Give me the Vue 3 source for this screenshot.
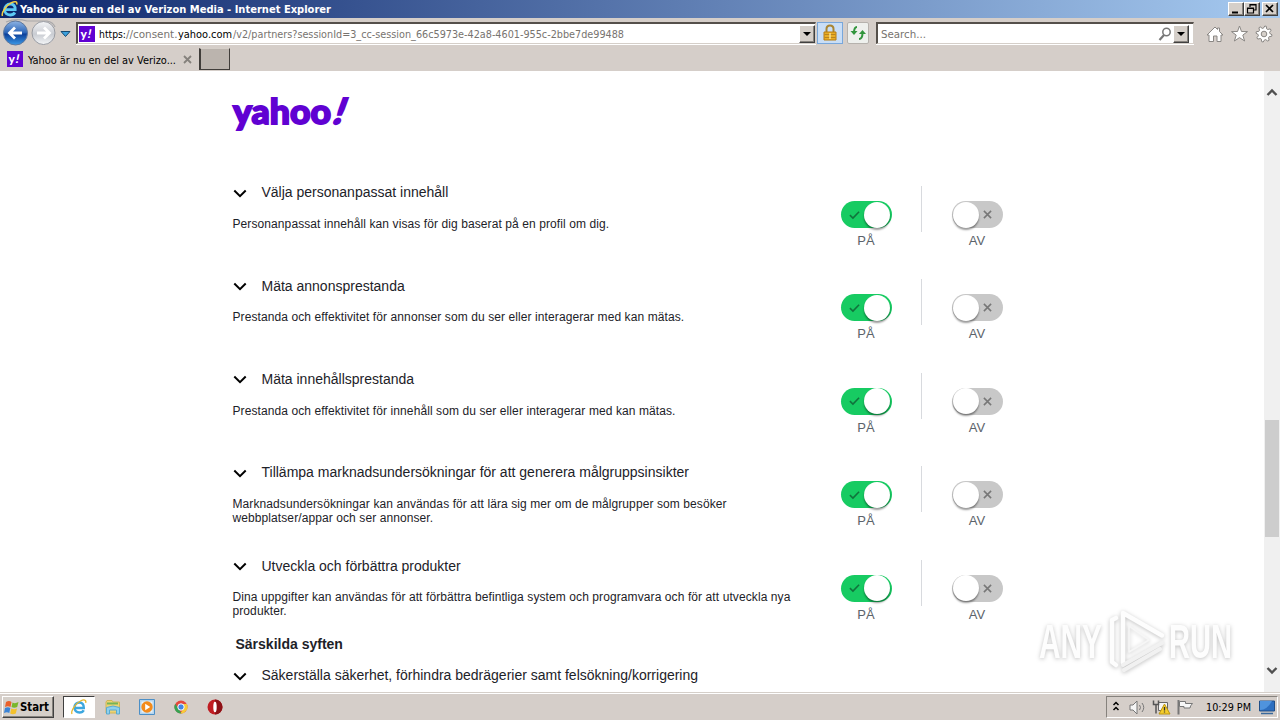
<template>
  <div class="screen">
    <header class="titlebar">
      <svg class="title-icon" viewBox="0 0 18 18">
        <path d="M3.4 9.6h10.8c.2-3.600-1.700-5.600-4.800-5.600-3.500 0-5.800 2.400-5.800 5.800 0 3.200 2.200 5.200 5.500 5.200 2.200 0 3.900-.9 4.800-2.500" fill="none" stroke="#5cc9f5" stroke-width="2.800" />
        <path d="M1.500 16c-1.500-3 3.500-10.500 9-13.300 3.500-1.800 6-1.200 5.200 1.800" fill="none" stroke="#f5cf45" stroke-width="1.500" />
      </svg>
      <svg class="title-text" width="320" height="18">
        <text x="1" y="13" textLength="311" lengthAdjust="spacingAndGlyphs">Yahoo är nu en del av Verizon Media - Internet Explorer</text>
      </svg>
      <div class="window-buttons">
        <span class="bevel"><svg viewBox="0 0 16 14"><path d="M4 10.500h6" stroke="#000" stroke-width="2" /></svg></span>
        <span class="bevel"><svg viewBox="0 0 16 14"><path d="M6 5V2.500h6V8h-2M6 3h6M3.500 6h6v5h-6zM3 6.500h7" fill="none" stroke="#000" stroke-width="1.200" /></svg></span>
        <span class="bevel close"><svg viewBox="0 0 16 14"><path d="M4 3l7 7M11 3l-7 7" stroke="#000" stroke-width="1.700" /></svg></span>
      </div>
    </header>

    <div class="navbar">
      <svg class="nav-arrows" viewBox="0 0 76 30">
        <defs>
          <linearGradient id="back" x1="0" y1="0" x2="0" y2="1">
            <stop offset="0" stop-color="#8eb4e4" />
            <stop offset=".48" stop-color="#2d66b8" />
            <stop offset=".55" stop-color="#0c409a" />
            <stop offset="1" stop-color="#3d9be8" />
          </linearGradient>
          <linearGradient id="fwd" x1="0" y1="0" x2="0" y2="1">
            <stop offset="0" stop-color="#f4f5f7" />
            <stop offset=".55" stop-color="#c9ccd2" />
            <stop offset="1" stop-color="#f4f6f8" />
          </linearGradient>
        </defs>
        <path d="M6 4Q16 0 27 3h20q6 1 8 6" fill="none" stroke="#a9a8aa" stroke-width="1.200" />
        <circle cx="15.500" cy="15" r="12" fill="url(#back)" stroke="#5f789d" />
        <path d="M22 15H10M15 9.500L9.500 15l5.500 5.500" fill="none" stroke="#fff" stroke-width="2.800" />
        <circle cx="43.500" cy="15" r="11.500" fill="url(#fwd)" stroke="#999ca3" />
        <path d="M37 15h12M44 9.500l5.500 5.500-5.500 5.500" fill="none" stroke="#fff" stroke-width="2.800" />
        <path d="M61 13.500h9l-4.500 5z" fill="#3ba0dc" stroke="#164a72" />
      </svg>
      <div class="field address">
        <span class="favicon"><svg viewBox="0 0 16 16"><text x="1.500" y="11.500">y</text><text x="8.500" y="11.500" transform="skewX(-12) translate(2)">!</text></svg></span>
        <svg class="url" width="690" height="18">
          <text x="0" y="13" textLength="27" lengthAdjust="spacingAndGlyphs" class="dark">https:</text>
          <text x="27" y="13" textLength="51.500" lengthAdjust="spacingAndGlyphs">//consent.</text>
          <text x="79" y="13" textLength="54" lengthAdjust="spacingAndGlyphs" class="dark">yahoo.com</text>
          <text x="134" y="13" textLength="391" lengthAdjust="spacingAndGlyphs">/v2/partners?sessionId=3_cc-session_66c5973e-42a8-4601-955c-2bbe7de99488</text>
        </svg>
        <span class="bevel drop"><i></i></span>
      </div>
      <div class="tool lock">
        <svg viewBox="0 0 16 18">
          <path d="M4.500 9V5q0-3.500 3.500-3.500T11.500 5v4" fill="none" stroke="#a98532" stroke-width="2" />
          <path d="M2 8h12v8H2z" fill="#e9ae24" stroke="#b77d13" />
          <path d="M2.500 10.500h11M2.500 13.500h11" stroke="#b98420" />
          <path d="M8 9v6" stroke="#f9e292" stroke-width="1.500" />
        </svg>
      </div>
      <div class="tool refresh">
        <svg viewBox="0 0 18 18">
          <path d="M8 3Q5 3 5 9M10 15q3.500 0 3.500-6" fill="none" stroke="#31953c" stroke-width="2" />
          <path d="M1.500 7h7L5 11zM10 10h7l-3.500-4z" fill="#31953c" />
        </svg>
      </div>
      <div class="field search">
        <svg width="60" height="18"><text x="3" y="13" textLength="45" lengthAdjust="spacingAndGlyphs">Search...</text></svg>
        <svg class="magnifier" viewBox="0 0 14 14"><circle cx="8.500" cy="5" r="3.700" fill="none" stroke="#777" stroke-width="1.500" /><path d="M6 8l-4.500 5" stroke="#777" stroke-width="2.200" /></svg>
        <span class="bevel drop"><i></i></span>
      </div>
      <svg class="nav-icons" viewBox="0 0 68 20">
        <g fill="#fff" stroke="#8a8784">
          <path d="M1 12L9 4l2.500 2.500V5h2v3.500L17 12h-2v6.500h-4V13H7.500v5.500H3V12z" />
          <path d="M33.500 3l2 5.500 6 .1-4.700 3.500 1.800 5.900-5.100-3.400-5.100 3.400 1.800-5.900-4.700-3.500 6-.1z" />
          <path :d="gear" />
          <circle cx="58" cy="11" r="2.800" fill="#d6d0ca" />
        </g>
      </svg>
    </div>

    <div class="tabs">
      <div class="tab">
        <span class="favicon"><svg viewBox="0 0 16 16"><text x="1.500" y="11.500">y</text><text x="8.500" y="11.500" transform="skewX(-12) translate(2)">!</text></svg></span>
        <svg width="154" height="18"><text x="1" y="14" textLength="148" lengthAdjust="spacingAndGlyphs">Yahoo är nu en del av Verizo...</text></svg>
        <svg class="tab-close" viewBox="0 0 9 9"><path d="M1 1l7 7M8 1L1 8" stroke="#85817c" stroke-width="1.800" /></svg>
      </div>
      <div class="new-tab"></div>
    </div>

    <div class="viewport">
      <main class="page">
        <svg class="logo" width="122" height="40" viewBox="0 0 122 40">
          <text x="1" y="27.500" textLength="98" lengthAdjust="spacingAndGlyphs">yahoo</text>
          <text x="0" y="0" class="bang" transform="translate(99 27.500) skewX(-20)">!</text>
        </svg>

        <section v-for="row in rows" :key="row.title" class="row">
          <div class="info">
            <h3><svg class="chevron" viewBox="0 0 14 9"><path d="M1.300 1.500L7 7.200l5.700-5.700" /></svg>{{ row.title }}</h3>
            <p><span v-for="line in row.lines" :key="line">{{ line }}</span></p>
          </div>
          <div class="choice">
            <div class="switch on"><svg viewBox="0 0 12 10"><path d="M1 5.200L4.300 8.400 11 1.500" /></svg><b></b></div>
            <span>PÅ</span>
          </div>
          <div class="divider"></div>
          <div class="choice">
            <div class="switch"><b></b><svg viewBox="0 0 10 10"><path d="M1 1l8 8M9 1L1 9" /></svg></div>
            <span>AV</span>
          </div>
        </section>

        <h2>Särskilda syften</h2>
        <h3><svg class="chevron" viewBox="0 0 14 9"><path d="M1.300 1.500L7 7.200l5.700-5.700" /></svg>Säkerställa säkerhet, förhindra bedrägerier samt felsökning/korrigering</h3>
      </main>

      <div class="scrollbar">
        <svg viewBox="0 0 12 9"><path d="M1.500 7L6 2.500 10.500 7" /></svg>
        <div class="thumb"></div>
        <svg viewBox="0 0 12 9"><path d="M1.500 2L6 6.500 10.500 2" /></svg>
      </div>

      <svg class="watermark" width="250" height="80" viewBox="0 0 250 80">
        <g fill="#fdfdfd">
          <text x="9" y="55" textLength="63" lengthAdjust="spacingAndGlyphs">ANY</text>
          <text x="139" y="55" textLength="63" lengthAdjust="spacingAndGlyphs">RUN</text>
        </g>
        <g fill="none" stroke="#fdfdfd" stroke-width="4.500" stroke-linejoin="round" stroke-linecap="round">
          <path d="M93 60V10l39 22.500M86 15l-4 2v42l4 3" />
          <path d="M132 40L93 62M130 46L94 67" stroke="#f1f1f1" stroke-width="4" />
          <path d="M99 23v26l20-12z" stroke="#f6f6f6" stroke-width="1.500" />
        </g>
      </svg>
    </div>

    <footer class="taskbar">
      <div class="bevel start">
        <svg viewBox="0 0 16 16">
          <path d="M2 3q3-2 5.500 0L6.500 8Q4 6.500 1 8z" fill="#e9602b" />
          <path d="M8.500 3.500Q11 5 14.500 3l-1.300 5q-3 1.500-5.700 0z" fill="#79b72c" />
          <path d="M1 9q3-1.500 5.300 0l-1 5Q3 12.500 0 14z" fill="#3a83d6" />
          <path d="M7.300 9.500q2.700 1.500 5.700 0l-1.200 5q-3 1.500-5.600 0z" fill="#f4c12c" />
        </svg>
        <svg width="36" height="18"><text x="0" y="13" textLength="29" lengthAdjust="spacingAndGlyphs">Start</text></svg>
      </div>
      <div class="launch active">
        <svg viewBox="0 0 18 18">
          <path d="M4 10h9.800C14 6.500 12.200 4.500 9.500 4.500c-3 0-5 2.200-5 5 0 3 2 5 5 5 2 0 3.500-.8 4.200-2.300" fill="none" stroke="#3ca7df" stroke-width="2.500" />
          <path d="M2 16c-1.500-3 3.500-10.500 8.500-13 3.500-1.800 6-1.200 5.200 1.800" fill="none" stroke="#e6b72d" stroke-width="1.300" />
        </svg>
      </div>
      <div class="launch">
        <svg viewBox="0 0 18 18">
          <path d="M2 4l1-1.500h5L9 4h6.500v11H2z" fill="#edd374" stroke="#cfb556" />
          <path d="M3 5.500h11" stroke="#76b456" stroke-width="2" />
          <path d="M2.500 16V9.500q6.500-3 13 0V16h-3v-4h-7v4z" fill="#8ed0ee" stroke="#5aaacf" />
        </svg>
      </div>
      <div class="launch">
        <svg viewBox="0 0 18 18">
          <path d="M1.500 1.500h15v15h-15z" fill="#b5d5ee" stroke="#4c8fc6" />
          <path d="M3.500 3.500h11v11h-11z" fill="#e9f2f8" />
          <circle cx="9" cy="9" r="5.700" fill="#f38b1c" />
          <path d="M7.200 5.700v6.600L12.200 9z" fill="#fff" />
        </svg>
      </div>
      <div class="launch">
        <svg viewBox="0 0 18 18">
          <circle cx="9" cy="9" r="6.500" fill="#e5483c" />
          <path d="M3.300 5.700L8 13l1.500 2.500A6.500 6.500 0 0 1 3.300 5.700" fill="#36a252" />
          <path d="M9 6h5.800A6.500 6.500 0 0 1 8.500 15.500L12 9z" fill="#f7cb38" />
          <circle cx="9" cy="9" r="3.200" fill="#4285e4" stroke="#fff" />
        </svg>
      </div>
      <div class="launch">
        <svg viewBox="0 0 18 18">
          <circle cx="9" cy="9" r="7.500" fill="#c01d22" />
          <path d="M9 1.500a7.500 7.500 0 0 1 0 15z" fill="#8d1116" />
          <ellipse cx="9" cy="9" rx="1.700" ry="5.300" fill="#fff" />
        </svg>
      </div>
      <div class="tray">
        <svg width="92" height="20" viewBox="0 0 92 20">
          <path d="M6.500 8L9 5.500 11.500 8M6.500 13L9 10.500 11.500 13" fill="none" stroke="#000" stroke-width="1.500" />
          <path d="M23 8h3l4-4v13l-4-4h-3z" fill="#f5f5f5" stroke="#777" />
          <path d="M32.500 8q2 2.500 0 5M35 6q3.500 4.500 0 9" fill="none" stroke="#777" />
          <path d="M51.500 5.500h9v8h-9z" fill="#f5f5f5" stroke="#666" />
          <path d="M46.500 3.500v4h5v-4M49 7.500v9" fill="none" stroke="#555" stroke-width="1.500" />
          <path d="M57.500 7l5.500 10H52z" fill="#f5cd2b" stroke="#bc9510" />
          <path d="M57.500 10v3.500M57.500 14.500v1" stroke="#333" stroke-width="1.300" />
          <path d="M71.500 3v14.500" stroke="#777" stroke-width="2" />
          <path d="M72.500 4.500h6v2h7q-2.500 2.500-2.500 4.500H77V9.500h-4.500z" fill="#f7f7f7" stroke="#777" />
        </svg>
        <svg width="50" height="20"><text x="2" y="14" textLength="45" lengthAdjust="spacingAndGlyphs">10:29 PM</text></svg>
        <svg class="desktop" viewBox="0 0 16 15"><path d="M.5 1h15v10H.5z" fill="#2d6fc0" stroke="#214f87" /><path d="M1 10q7 0 12-9H1z" fill="#4f93dd" /><path d="M2 13.500h12" stroke="#39699c" stroke-width="1.500" /></svg>
      </div>
    </footer>
  </div>
</template>

<script setup>
const rows = [
  {
    title: 'Välja personanpassat innehåll',
    lines: ['Personanpassat innehåll kan visas för dig baserat på en profil om dig.']
  },
  {
    title: 'Mäta annonsprestanda',
    lines: ['Prestanda och effektivitet för annonser som du ser eller interagerar med kan mätas.']
  },
  {
    title: 'Mäta innehållsprestanda',
    lines: ['Prestanda och effektivitet för innehåll som du ser eller interagerar med kan mätas.']
  },
  {
    title: 'Tillämpa marknadsundersökningar för att generera målgruppsinsikter',
    lines: [
      'Marknadsundersökningar kan användas för att lära sig mer om de målgrupper som besöker',
      'webbplatser/appar och ser annonser.'
    ]
  },
  {
    title: 'Utveckla och förbättra produkter',
    lines: [
      'Dina uppgifter kan användas för att förbättra befintliga system och programvara och för att utveckla nya',
      'produkter.'
    ]
  }
]

// eight-toothed gear outline around (58, 11)
const gear = (() => {
  const points = []
  for (let i = 0; i < 32; i++) {
    const r = i % 4 < 2 ? 8 : 5.8
    const a = ((i + 0.5) / 32) * Math.PI * 2
    points.push(`${(58 + r * Math.cos(a)).toFixed(1)} ${(11 + r * Math.sin(a)).toFixed(1)}`)
  }
  return `M${points.join('L')}Z`
})()
</script>

<style>
body {
  margin: 0;
  overflow: hidden;
}
</style>

<style scoped>
.screen {
  width: 1280px;
  height: 720px;
  display: flex;
  flex-direction: column;
  background: #d5cec9;
  font-family: "Liberation Sans", Arial, sans-serif;
  overflow: hidden;
}

svg {
  display: block;
  flex: none;
}

.titlebar text,
.navbar text,
.tabs text,
.taskbar text {
  font-family: "DejaVu Sans Condensed", "DejaVu Sans", sans-serif;
  font-size: 11px;
}

.bevel {
  display: flex;
  align-items: center;
  justify-content: center;
  box-sizing: border-box;
  background: #d5cfc9;
  border: 1px solid;
  border-color: #fff #404040 #404040 #fff;
  box-shadow: inset -1px -1px #86827d;
}

.titlebar {
  height: 18px;
  display: flex;
  align-items: center;
  background: linear-gradient(90deg, #0c256b, #a6caf0);
}

.title-icon {
  width: 18px;
  height: 18px;
  margin-left: 1px;
}

.titlebar .title-text text {
  fill: #fff;
  font-weight: bold;
}

.window-buttons {
  margin-left: auto;
  margin-right: 2px;
  display: flex;
}

.window-buttons .bevel {
  width: 16px;
  height: 14px;
}

.window-buttons svg {
  width: 16px;
  height: 14px;
}

.window-buttons .close {
  margin-left: 2px;
}

.navbar {
  height: 30px;
  display: flex;
  align-items: center;
}

.nav-arrows {
  width: 76px;
  height: 30px;
}

.field {
  height: 22px;
  box-sizing: border-box;
  display: flex;
  align-items: center;
  background: #fff;
  border: 1px solid;
  border-color: #55504b #d5cfc9 #d5cfc9 #55504b;
  border-top-width: 2px;
  border-left-width: 2px;
  box-shadow: 0 1px #fff;
}

.address {
  width: 740px;
}

.favicon {
  flex: none;
  width: 16px;
  height: 16px;
  margin-left: 1px;
  background: #6001d2;
}

.favicon text {
  fill: #fff;
  font-family: Lato, sans-serif;
  font-size: 12px;
  font-weight: 900;
}

.url {
  margin-left: 4px;
}

.url text,
.search text {
  fill: #77736f;
}

.url .dark {
  fill: #000;
}

.drop {
  width: 16px;
  height: 18px;
  margin-left: auto;
}

.drop i {
  border: 4px solid transparent;
  border-top-color: #000;
  border-bottom: 0;
}

.tool {
  box-sizing: border-box;
  height: 22px;
  display: flex;
  align-items: center;
  justify-content: center;
}

.lock {
  width: 26px;
  margin-left: 1px;
  background: #c9def6;
  border: 1px solid #78a7db;
}

.lock svg {
  width: 16px;
  height: 18px;
}

.refresh {
  width: 22px;
  margin-left: 4px;
  background: #eef0ed;
  border: 1px solid #b6b2ad;
  border-radius: 2px;
}

.refresh svg {
  width: 18px;
  height: 18px;
}

.search {
  width: 318px;
  margin-left: 7px;
  padding-right: 4px;
}

.magnifier {
  width: 14px;
  height: 14px;
  margin-left: auto;
}

.search .drop {
  margin-left: 1px;
}

.nav-icons {
  width: 68px;
  height: 20px;
  margin-left: 12px;
}

.tabs {
  height: 23px;
  display: flex;
}

.tab {
  width: 198px;
  height: 22px;
  padding-left: 6px;
  box-sizing: border-box;
  display: flex;
  align-items: center;
}

.tab > svg:first-of-type {
  margin-left: 4px;
}

.tab-close {
  width: 9px;
  height: 9px;
  margin-left: 2px;
}

.new-tab {
  width: 31px;
  height: 22px;
  margin-left: 1px;
  box-sizing: border-box;
  background: #bbb4ae;
  border: 1px solid #403d3a;
  border-top-color: #d5cfc9;
  border-left-width: 2px;
}

.viewport {
  position: relative;
  height: 621px;
  display: flex;
  justify-content: space-between;
  background: #fff;
  overflow: hidden;
}

.page {
  width: 790px;
  padding-left: 232px;
  color: #1d2228;
}

.logo {
  margin: 25px 0 48px;
  overflow: visible;
}

.logo text {
  fill: #6001d2;
  stroke: #6001d2;
  stroke-width: 1.8px;
  font-family: Lato, sans-serif;
  font-weight: 900;
  font-size: 34px;
}

.logo .bang {
  font-size: 36px;
}

.row {
  height: 93.4px;
  display: flex;
}

.row:nth-of-type(5) {
  height: 78.4px;
}

.info {
  width: 608px;
}

h3 {
  margin: 0;
  padding-top: 0.2px;
  display: flex;
  align-items: center;
  font-size: 14px;
  font-weight: normal;
  line-height: 16px;
  white-space: nowrap;
}

.chevron {
  width: 14px;
  height: 9px;
  margin: 2px 14.5px 0 1px;
}

.chevron path {
  fill: none;
  stroke: #000;
  stroke-width: 2px;
}

p {
  margin: 16.55px 0 0 0.5px;
  font-size: 12px;
  letter-spacing: 0.093px;
  line-height: 14px;
}

p span {
  display: block;
  white-space: nowrap;
}

.choice {
  width: 52px;
  padding-top: 17px;
  display: flex;
  flex-direction: column;
  align-items: center;
  color: #5b636a;
  font-size: 13px;
  line-height: 16px;
}

.choice span {
  margin-top: 5px;
}

.switch {
  width: 51px;
  height: 27px;
  display: flex;
  align-items: center;
  border-radius: 14px;
  background: #c8c8c8;
}

.switch.on {
  background: #17cb62;
}

.switch b {
  width: 26px;
  height: 26px;
  margin-left: 1px;
  border-radius: 50%;
  background: #fff;
  box-shadow: 0 2px 2px rgba(0, 0, 0, 0.4);
}

.switch svg {
  width: 9px;
  height: 9px;
  margin-left: 4px;
  fill: none;
  stroke: #777;
  stroke-width: 1.7px;
}

.switch.on svg {
  width: 11px;
  height: 10px;
  margin-left: 8px;
  stroke: #10733c;
}

.switch.on b {
  margin-left: 4px;
}

.divider {
  width: 1px;
  height: 46px;
  margin: 2px 29px 0;
  background: #d8dade;
}

h2 {
  margin: 0 0 15px 3.5px;
  font-size: 14px;
  line-height: 16px;
}

.scrollbar {
  width: 16px;
  display: flex;
  flex-direction: column;
  align-items: center;
  background: #f0f0f0;
}

.scrollbar svg {
  width: 12px;
  height: 9px;
  margin-top: 17px;
  fill: none;
  stroke: #505050;
  stroke-width: 2.4px;
}

.thumb {
  width: 14px;
  height: 117px;
  margin-top: 323px;
  background: #cdcdcd;
}

.thumb + svg {
  margin-top: 129px;
}

.watermark {
  position: absolute;
  left: 1030px;
  top: 532px;
  filter: drop-shadow(0 1px 2px rgba(0, 0, 0, 0.25));
}

.watermark text {
  font-size: 49px;
  font-weight: bold;
}

.taskbar {
  height: 28px;
  box-sizing: border-box;
  padding: 3px 2px 0;
  display: flex;
  border-top: 1px solid #d5cfc9;
  box-shadow: inset 0 1px #fff;
}

.start {
  width: 52px;
  height: 22px;
  justify-content: flex-start;
  padding-left: 1px;
  margin-right: 9px;
}

.start svg:first-child {
  width: 16px;
  height: 16px;
}

.start text {
  font-size: 12px;
  font-weight: bold;
}

.launch {
  width: 32px;
  height: 22px;
  margin-right: 2px;
  display: flex;
  align-items: center;
  justify-content: center;
}

.launch svg {
  width: 18px;
  height: 18px;
}

.launch.active {
  width: 32px;
  box-sizing: border-box;
  background: #fff;
  border: 1px solid;
  border-color: #404040 #fff #fff #404040;
}

.tray {
  width: 172px;
  height: 22px;
  margin-left: auto;
  box-sizing: border-box;
  display: flex;
  align-items: center;
  border: 1px solid;
  border-color: #86827d #fff #fff #86827d;
}

.tray svg:nth-child(2) {
  margin-left: 5px;
}

.desktop {
  width: 16px;
  height: 15px;
  margin-left: 5px;
}
</style>
